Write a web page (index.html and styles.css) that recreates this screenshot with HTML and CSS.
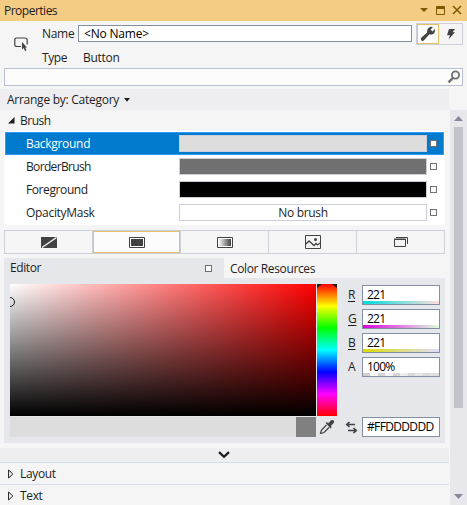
FILE: index.html
```html
<!DOCTYPE html>
<html lang="en">
<head>
<meta charset="utf-8">
<title>Properties</title>
<link rel="stylesheet" href="styles.css">
</head>
<body>
<div class="panel">
  <header class="titlebar">
    <span class="title">Properties</span>
    <svg class="window-buttons" width="44" height="21" viewBox="0 0 44 21" fill="none" stroke="#7d5700">
      <path d="M0 8h8l-4 4z" fill="#7d5700" stroke="none"/>
      <path d="M16.500 6.500h8v8h-8zM16 7.500h9M16 8.500h9"/>
      <path d="M33 6l8 8M41 6l-8 8" stroke-width="1.500"/>
    </svg>
  </header>

  <section class="identity">
    <svg class="element-icon" width="16" height="16" viewBox="0 0 16 16">
      <path d="M7 9.500H3Q.8 9.500 .8 7.500V3Q.8 1 3 1H11Q13.200 1 13.200 3V7.500" fill="none" stroke="#424242" stroke-width="1.200"/>
      <path d="M8 5v7.500l1.700-1.500L11 14l1.500-.8-1.300-2.700H13z" fill="#424242"/>
    </svg>
    <div class="fields">
      <span class="w-name">Name</span><div class="name-input"><span class="w-noname">&lt;No Name&gt;</span></div>
      <span class="w-type">Type</span><span class="type-value">Button</span>
    </div>
    <div class="modes">
      <div class="mode active">
        <svg width="16" height="16" viewBox="0 0 16 16"><path d="M10 1Q12 .5 13 1L10.500 3.600 12.400 5.600 15 3Q15.500 7 12.600 8.200 11 8.800 9.500 8.300L4 14.300Q2.500 15.500 1.200 14.200 .2 12.800 1.500 11.500L7.200 6.500Q6.500 2.500 10 1z" fill="#424242"/></svg>
      </div>
      <div class="mode">
        <svg width="16" height="16" viewBox="0 0 16 16"><path d="M6 3h6L9.500 6.300H12L5.500 13.500 7 9.200H4z" fill="#424242"/></svg>
      </div>
    </div>
  </section>

  <div class="search">
    <svg width="14" height="14" viewBox="0 0 14 14" fill="none" stroke="#717171"><circle cx="8.500" cy="5" r="3.600" stroke-width="1.800"/><path d="M6 7.800L1.500 12.300" stroke-width="2.500"/></svg>
  </div>

  <div class="arrange"><span class="w-arrange">Arrange by: Category</span><svg width="6" height="4" viewBox="0 0 6 4"><path d="M0 0h6L3 3.700z" fill="#1e1e1e"/></svg></div>

  <div class="body">
    <main class="content">
      <div class="category brush-head"><svg width="7" height="7" viewBox="0 0 7 7"><path d="M6.500 0v6.500H0z" fill="#1e1e1e"/></svg><span class="w-brush">Brush</span></div>
      <div class="properties">
        <div class="row selected"><span class="label w-background">Background</span><div class="swatch light"></div><i class="marker"></i></div>
        <div class="row"><span class="label w-border">BorderBrush</span><div class="swatch gray"></div><i class="marker"></i></div>
        <div class="row"><span class="label w-foreground">Foreground</span><div class="swatch black"></div><i class="marker"></i></div>
        <div class="row"><span class="label w-opacity">OpacityMask</span><div class="swatch"><span class="w-nobrush">No brush</span></div><i class="marker"></i></div>
      </div>

      <div class="brush-types">
        <div class="type"><svg width="16" height="11" viewBox="0 0 16 11"><path d="M0 0h16v11H0z" fill="#424242"/><path d="M1 10.500L15.500 .5" stroke="#f5f5f5" stroke-width="1.300"/></svg></div>
        <div class="type active"><svg width="16" height="11" viewBox="0 0 16 11"><path d="M.5 .5h15v10H.5z" fill="#fff" stroke="#424242"/><path d="M2 2h12v7H2z" fill="#424242"/></svg></div>
        <div class="type"><svg width="16" height="11" viewBox="0 0 16 11"><defs><linearGradient id="fade"><stop stop-color="#f5f5f5"/><stop offset="1" stop-color="#424242"/></linearGradient></defs><path d="M.5 .5h15v10H.5z" fill="#fff" stroke="#424242"/><path d="M2 2h12v7H2z" fill="url(#fade)"/></svg></div>
        <div class="type"><svg width="16" height="14" viewBox="0 0 16 14" fill="none" stroke="#424242"><path d="M.5 .5h15v13H.5z"/><path d="M1 9l3-3 5 4.500 2-2 1.500 1.500L15 8" stroke-width="1.300"/><circle cx="10.500" cy="4.500" r="1.500" fill="#424242" stroke="none"/></svg></div>
        <div class="type"><svg width="16" height="12" viewBox="0 0 16 12" fill="none" stroke="#424242"><path d="M1.500 3.500h11v7h-11zM1 3h12M3 1.500h11.500V8"/></svg></div>
      </div>

      <div class="editor">
        <div class="tabs">
          <div class="tab"><span class="w-editor">Editor</span><i class="marker"></i></div>
          <div class="tab other"><span class="w-resources">Color Resources</span></div>
        </div>
        <div class="picker">
          <div class="spectrum"><i class="cursor"></i></div>
          <div class="hue"><svg width="20" height="5" viewBox="0 0 20 5"><path d="M0 0h5L0 4zM20 0h-5l5 4z" fill="#1e1e1e"/></svg></div>
          <div class="channels">
            <u>R</u><div class="channel"><span class="w-num">221</span><b class="bar red"></b></div>
            <u>G</u><div class="channel"><span class="w-num">221</span><b class="bar green"></b></div>
            <u>B</u><div class="channel"><span class="w-num">221</span><b class="bar blue"></b></div>
            <span class="letter">A</span><div class="channel"><span class="w-pct">100%</span><b class="bar alpha"></b></div>
          </div>
          <div class="result"><div class="current"></div><div class="previous"></div></div>
          <svg class="dropper" width="16" height="16" viewBox="0 0 16 16"><path d="M7.500 6L2.500 11 1.500 14.500 5 13.500 10 8.500" fill="#e6e7eb" stroke="#424242" stroke-width="1.200"/><path d="M6.500 3.800L8 3.300 9.300 4.300 11.800 1.500Q13.500 .3 14.700 1.500 15.800 2.700 14.500 4.300L11.900 7 12.700 8.200 11.500 9.500z" fill="#424242"/></svg>
          <div class="hex-group">
            <svg width="13" height="13" viewBox="0 0 13 13" fill="none" stroke="#424242" stroke-width="1.700"><path d="M10 3.500H1.500M4.500 1L1.800 3.500l2.700 2.500M3 9.500h8.500M8.500 7l2.700 2.500-2.700 2.500"/></svg>
            <div class="hex"><span class="w-hex">#FFDDDDDD</span></div>
          </div>
        </div>
      </div>
      <div class="expander"><svg width="12" height="8" viewBox="0 0 12 8"><path d="M1 1.200l5 4.600 5-4.600" fill="none" stroke="#1e1e1e" stroke-width="2.300"/></svg></div>
      <div class="category closed"><svg width="6" height="10" viewBox="0 0 6 10"><path d="M.6 1v8L4.800 5z" fill="none" stroke="#1e1e1e"/></svg><span class="w-layout">Layout</span></div>
      <div class="category closed"><svg width="6" height="10" viewBox="0 0 6 10"><path d="M.6 1v8L4.800 5z" fill="none" stroke="#1e1e1e"/></svg><span class="w-text">Text</span></div>
    </main>
    <aside class="scrollbar">
      <svg width="9" height="5" viewBox="0 0 9 5"><path d="M0 5h9L4.500 0z" fill="#868999"/></svg>
      <div class="thumb"></div>
      <svg class="down" width="9" height="5" viewBox="0 0 9 5"><path d="M0 0h9L4.500 5z" fill="#868999"/></svg>
    </aside>
  </div>
</div>
</body>
</html>
```

FILE: styles.css
```css
* { box-sizing: border-box; }
body { margin: 0; }
svg { display: block; flex: none; }
span, u { white-space: nowrap; }

.panel {
  width: 467px;
  height: 505px;
  overflow: hidden;
  background: #f5f5f5;
  color: #1e1e1e;
  font: 12px/16px "Open Sans", "Noto Sans", sans-serif;
  letter-spacing: -0.3px;
}

.titlebar {
  height: 21px;
  padding: 0 4px;
  display: flex;
  align-items: center;
  justify-content: space-between;
  background: #f5cc84;
}
.titlebar .window-buttons { margin-right: -1px; }
.title { letter-spacing: -0.5px; }

.identity { height: 47px; display: flex; padding: 2px 4px 0 14px; }
.element-icon { margin-top: 14px; }
.fields {
  width: 370px;
  margin: 2px 4px 0 12px;
  display: grid;
  grid-template-columns: 36px 334px;
  grid-template-rows: 17px 16px;
  row-gap: 7px;
  align-items: center;
}
.w-name { padding-top: 1px; }
.w-type, .type-value { padding-top: 1px; }
.w-type { letter-spacing: -0.4px; }
.name-input {
  height: 17px;
  padding-left: 5px;
  border: 1px solid #848fa3;
  background: #fff;
  line-height: 16px;
  color: #000;
}
.w-noname { letter-spacing: -0.2px; }
.type-value { padding-left: 5px; }
.modes { display: flex; width: 47px; height: 22px; border: 1px solid #ccceda; }
.mode { width: 23px; display: flex; align-items: center; justify-content: center; }
.mode.active { width: 22px; border: 1px solid #e5c365; background: #fcfcfc; }

.search {
  height: 18px;
  margin: 0 4px 3px;
  padding-right: 1px;
  border: 1px solid #b8c1d1;
  background: #fcfcfc;
  display: flex;
  align-items: center;
  justify-content: flex-end;
}
.arrange {
  width: 449px;
  height: 21px;
  padding-left: 7px;
  display: flex;
  align-items: center;
  gap: 5px;
  background: #eeeef0;
}
.w-arrange { padding-top: 1px; letter-spacing: -0.26px; }

.body { display: flex; height: 395px; }
.content { width: 450px; }
.category { display: flex; align-items: center; padding-left: 8px; }
.category span { margin-left: 6px; }
.brush-head { height: 21px; }
.brush-head span { margin-left: 5px; padding-top: 1px; letter-spacing: -0.5px; }
.properties { width: 441px; height: 94px; margin-left: 4px; padding: 1px; background: #fff; }
.row { height: 23px; display: flex; align-items: center; }
.row.selected { background: #007acc; box-shadow: inset 0 0 0 1px #3399ff; color: #fff; }
.label { width: 174px; padding: 1px 0 0 21px; }
.w-border { letter-spacing: -0.65px; }
.w-foreground { letter-spacing: -0.4px; }
.swatch {
  width: 248px;
  height: 17px;
  border: 1px solid #ccceda;
  text-align: center;
  line-height: 16px;
}
.swatch.light { background: #ddd; }
.swatch.gray { background: #707070; }
.swatch.black { background: #000; }
.marker { width: 7px; height: 7px; border: 1px solid #717171; background: #fcfcfc; }
.row .marker { margin-left: 3px; }

.brush-types {
  width: 441px;
  height: 24px;
  margin: 5px 0 4px 4px;
  display: flex;
  border: 1px solid #ccceda;
}
.type { width: 88px; border-left: 1px solid #ccceda; display: flex; align-items: center; justify-content: center; }
.type:first-child { width: 87px; border-left: 0; }
.type.active { width: 87px; margin-left: 1px; border: 1px solid #e5c365; box-shadow: -1px 0 #ccceda; background: #fcfcfc; }

.editor { width: 441px; height: 185px; margin-left: 4px; background: #e6e7eb; }
.tabs { display: flex; height: 20px; }
.tab { width: 220px; padding: 0 12px 0 6px; display: flex; align-items: center; justify-content: space-between; }
.tab.other { width: 221px; background: #f5f5f5; }
.w-resources { padding-top: 1px; letter-spacing: -0.37px; }
.w-editor { letter-spacing: -0.4px; }
.tab .marker { margin-top: 1px; }
.picker {
  display: grid;
  grid-template-columns: 306px 20px 102px;
  grid-template-rows: 132px 20px;
  gap: 1px;
  padding: 6px 0 0 6px;
}
.spectrum {
  position: relative;
  overflow: hidden;
  background: linear-gradient(to bottom, transparent, #000), linear-gradient(to right, #fff, #f00);
}
.cursor {
  position: absolute;
  left: -5px;
  top: 13px;
  width: 10px;
  height: 10px;
  border: 1px solid #1e1e1e;
  border-radius: 50%;
}
.hue { background: linear-gradient(#f00, #ff0 16.67%, #0f0 33.33%, #0ff 50%, #00f 66.67%, #f0f 83.33%, #f00); }
.channels {
  margin: 1px 0 0 10px;
  display: grid;
  grid-template-columns: 14px 78px;
  grid-auto-rows: 20px;
  row-gap: 4px;
  align-content: start;
}
.channels u, .letter { padding-top: 2px; }
.channels u { text-underline-offset: 2px; }
.channel, .hex { border: 1px solid #848fa3; background: #fff; color: #000; }
.channel { display: flex; flex-direction: column; justify-content: space-between; }
.channel span { height: 15px; padding-left: 4px; line-height: 17px; letter-spacing: -0.75px; }
.bar { height: 3px; }
.red { background: linear-gradient(to right, #00dddd, #ffdddd); }
.green { background: linear-gradient(to right, #dd00dd, #ddffdd); }
.blue { background: linear-gradient(to right, #dddd00, #ddddff); }
.alpha { background: linear-gradient(to right, transparent, #ddd), repeating-linear-gradient(to right, #d0d0d0 0 7px, #fff 7px 15px); }
.result { display: flex; }
.current { width: 286px; background: #ddd; }
.previous { width: 20px; background: #808080; }
.dropper { margin: 2px 0 0 2px; }
.hex-group { display: flex; padding-left: 7px; align-items: center; gap: 4px; }
.hex { width: 78px; height: 20px; padding-left: 4px; line-height: 18px; letter-spacing: -0.65px; }

.expander { width: 449px; height: 14px; margin-top: 5px; padding: 3px 2px 0 0; display: flex; justify-content: center; background: #eeeef0; }
.closed { width: 449px; height: 22px; border-top: 1px solid #d6dde6; }
.closed span { padding-top: 1px; letter-spacing: -0.35px; }

.scrollbar { width: 17px; padding: 6px 4px 0; background: #e8e8ec; }
.thumb { width: 9px; height: 281px; margin-top: 6px; background: #c2c3c9; }
.down { margin-top: 86px; }
```
